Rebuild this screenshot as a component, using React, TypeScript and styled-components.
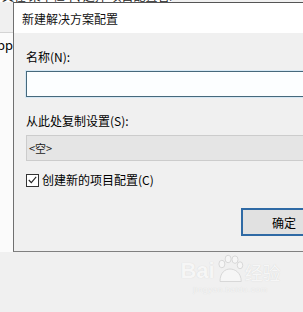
import styled, { createGlobalStyle } from 'styled-components'

const GlobalStyle = createGlobalStyle`
  html, body {
    margin: 0;
    padding: 0;
    background: #f0f0f0;
    overflow: hidden;
  }
  body {
    font-family: 'Noto Sans CJK SC', 'Noto Sans', sans-serif;
    color: #000;
  }
`

const Page = styled.div`
  width: 303px;
  height: 312px;
  display: flex;
  flex-direction: column;
  overflow: hidden;
  background: #f0f0f0;
`

const TopStrip = styled.div`
  height: 2px;
  overflow: hidden;
  display: flex;
  align-items: flex-end;
  background: #fff;
  font-size: 12px;
  line-height: 12px;
  white-space: nowrap;
  color: #222;
  padding-left: 2px;
  width: 170px;
`

const Stage = styled.div`
  display: flex;
  height: 250px;
  overflow: hidden;
`

const BackWindow = styled.div`
  width: 13px;
  flex-shrink: 0;
  display: flex;
  flex-direction: column;
  overflow: hidden;
`

const BackHeader = styled.div`
  height: 30px;
  background: #f0f0f0;
  border-bottom: 1px solid #d4d4d4;
`

const BackBody = styled.div`
  flex: 1;
  background: #fbfbfb;
  font-size: 13px;
  line-height: 16px;
  padding-top: 4px;
  display: flex;
  justify-content: flex-end;
  white-space: nowrap;
  font-family: 'Noto Sans', sans-serif;
`

const Dialog = styled.div`
  width: 330px;
  flex-shrink: 0;
  display: flex;
  flex-direction: column;
  border-top: 1px solid #555;
  border-left: 1px solid #707070;
  border-bottom: 1px solid #808080;
  background: #f0f0f0;
`

const TitleBar = styled.div`
  height: 30px;
  background: #fff;
  display: flex;
  align-items: center;
  padding-left: 8px;
  font-size: 12px;
  color: #111;
`

const Body = styled.div`
  flex: 1;
  padding: 16px 0 0 12px;
  display: flex;
  flex-direction: column;
`

const Label = styled.div<{ $gapTop?: number }>`
  font-size: 12px;
  line-height: 16px;
  margin-top: ${p => p.$gapTop ?? 0}px;
  margin-bottom: 6px;
`

const TextInput = styled.div`
  height: 24px;
  border: 1px solid #46697c;
  box-shadow: 0 0 0 1px #d6e8f4;
  background: #fcfeff;
`

const Combo = styled.div`
  height: 24px;
  border: 1px solid #cccccc;
  background: #e5e5e5;
  display: flex;
  align-items: center;
  padding-left: 2px;
  font-size: 11px;
  color: #222;
`

const CheckRow = styled.div`
  margin-top: 11px;
  display: flex;
  align-items: center;
  gap: 3px;
  font-size: 12px;
  line-height: 16px;
`

const Box = styled.div`
  width: 11px;
  height: 11px;
  border: 1px solid #333;
  background: #fff;
  display: flex;
  align-items: center;
  justify-content: center;
`

const ButtonRow = styled.div`
  margin-top: 20px;
  display: flex;
  padding-left: 215px;
`

const OkButton = styled.div`
  width: 82px;
  height: 24px;
  border: 2px solid #2f6aa5;
  background: #e1e1e1;
  display: flex;
  align-items: center;
  justify-content: center;
  font-size: 12px;
`

const Watermark = styled.div`
  display: flex;
  flex-direction: column;
  align-items: center;
  padding: 2px 0 0 158px;
  color: #f6f6f6;
  text-shadow: 0 0 1px #d2d2d2;
`

const MarkLine = styled.div`
  display: flex;
  align-items: flex-end;
  gap: 1px;
  font-family: 'Liberation Sans', sans-serif;
  font-weight: bold;
  font-size: 22px;
  line-height: 26px;
`

const MarkCn = styled.span`
  font-family: 'Noto Sans CJK SC', sans-serif;
  font-size: 18px;
  line-height: 24px;
  font-weight: normal;
`

const MarkUrl = styled.div`
  font-size: 8px;
  line-height: 12px;
  letter-spacing: 0.6px;
  font-family: 'Liberation Sans', sans-serif;
`

const Paw = () => (
  <svg width='28' height='30' viewBox='0 0 22 24' fill='#f6f6f6' stroke='#d4d4d4' strokeWidth='0.7'>
    <ellipse cx='4.5' cy='8' rx='2.4' ry='3' />
    <ellipse cx='9.5' cy='4' rx='2.4' ry='3' />
    <ellipse cx='15' cy='4.5' rx='2.4' ry='3' />
    <ellipse cx='19' cy='9' rx='2.2' ry='2.8' />
    <path d='M3 22 C3 15 7 12 11 12 C15 12 20 15 20 22 Z' />
  </svg>
)

const App = () => {
  return (
    <Page>
      <GlobalStyle />
      <TopStrip>又在 菜单栏中, 选择 项目配置管理器 内容中</TopStrip>
      <Stage>
        <BackWindow>
          <BackHeader />
          <BackBody>pp</BackBody>
        </BackWindow>
        <Dialog>
          <TitleBar>新建解决方案配置</TitleBar>
          <Body>
            <Label>名称(N):</Label>
            <TextInput />
            <Label $gapTop={16}>从此处复制设置(S):</Label>
            <Combo>&lt;空&gt;</Combo>
            <CheckRow>
              <Box>
                <svg width='9' height='8' viewBox='0 0 9 8'>
                  <path d='M0.8 4 L3.3 6.6 L8.2 0.9' fill='none' stroke='#222' strokeWidth='1.1' />
                </svg>
              </Box>
              创建新的项目配置(C)
            </CheckRow>
            <ButtonRow>
              <OkButton>确定</OkButton>
            </ButtonRow>
          </Body>
        </Dialog>
      </Stage>
      <Watermark>
        <MarkLine>
          Bai
          <Paw />
          <MarkCn>经验</MarkCn>
        </MarkLine>
        <MarkUrl>jingyan.baidu.com</MarkUrl>
      </Watermark>
    </Page>
  )
}

export default App
